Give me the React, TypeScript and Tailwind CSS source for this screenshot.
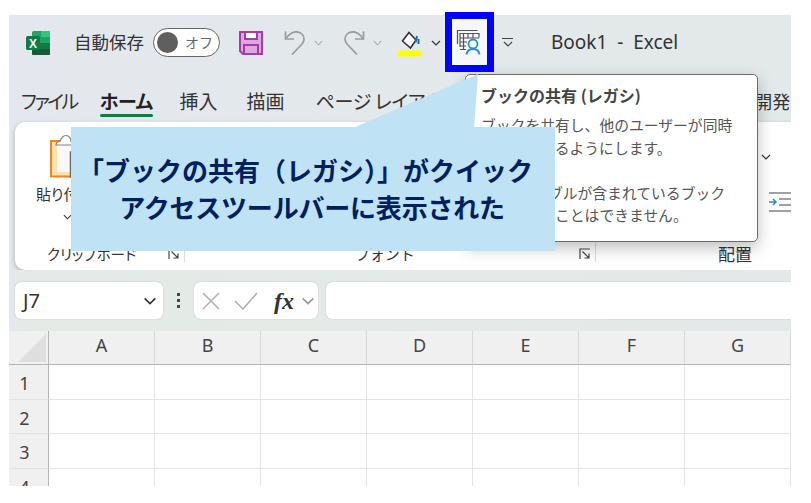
const font = '[font-family:"Noto_Sans_CJK_JP",sans-serif]';

const columns = ["A", "B", "C", "D", "E", "F", "G"];
const rows = ["1", "2", "3", "4"];

const Chevron = ({ className }: { className: string }) => (
  <svg viewBox="0 0 10 6" className={className} fill="none" stroke="currentColor" strokeWidth="1.2">
    <path d="M1 1l4 4 4-4" />
  </svg>
);

const ExcelLogo = () => (
  <svg viewBox="0 0 24 24" className="w-[24px] h-[24px]">
    <rect x="6" y="0" width="18" height="24" rx="1.5" fill="#21a366" />
    <rect x="15" y="0" width="9" height="6" fill="#33c481" />
    <rect x="6" y="12" width="18" height="6" fill="#107c41" />
    <rect x="15" y="6" width="9" height="6" fill="#21a366" />
    <rect x="6" y="18" width="18" height="6" rx="1" fill="#185c37" />
    <rect x="0" y="5" width="14" height="14" rx="1.5" fill="#107c41" />
    <text x="7" y="16.5" textAnchor="middle" fill="#fff" fontSize="12" fontWeight="700" fontFamily="Liberation Sans">X</text>
  </svg>
);

const SaveIcon = () => (
  <svg viewBox="0 0 24 24" className="w-[24px] h-[24px]">
    <path d="M1 1h22v22H4l-3-3z" fill="#dfa6df" stroke="#a23fa6" strokeWidth="2" />
    <rect x="6" y="1" width="12" height="7" fill="#fff" stroke="#a23fa6" strokeWidth="2" />
    <rect x="5" y="14" width="14" height="9" fill="#dfa6df" stroke="#a23fa6" strokeWidth="2" />
  </svg>
);

const UndoIcon = ({ flip }: { flip?: boolean }) => (
  <svg viewBox="0 0 24 24" className={flip ? "w-[24px] h-[24px] -scale-x-100" : "w-[24px] h-[24px]"} fill="none" stroke="#9c9c9c" strokeWidth="1.7">
    <path d="M2.500 0.500v7.500H11" />
    <path d="M2.500 8C6 3 9 0.800 13 0.800c5 0 8 3.500 8 7.200 0 2-1 3.800-2 5L9 23.500" />
  </svg>
);

const FillIcon = () => (
  <svg viewBox="0 0 24 26" className="w-[24px] h-[26px]" fill="none">
    <path d="M11 1.500L4.500 10l8 7 5.500-8z" stroke="#333" strokeWidth="1.600" fill="#fff" />
    <path d="M19 5c-.5 3-1 5-1.500 6.500M20.500 8v5" stroke="#1f6fb2" strokeWidth="2" />
    <rect x="0" y="19.500" width="24" height="6" fill="#ffff00" />
  </svg>
);

const ShareIcon = () => (
  <svg viewBox="0 0 26 26" className="w-[26px] h-[26px]" fill="none">
    <path d="M1.500 15V1.500h20M4 18V4.500h19v4M7.500 4.500V20.500H10M4 9h19M4 13h7M4 17h6M4 20.500h6M12 4.500V9M17 4.500V9" stroke="#555" strokeWidth="1.200" />
    <circle cx="17" cy="15" r="4.500" stroke="#2a8fd0" strokeWidth="1.800" fill="#f7f8f9" />
    <path d="M10.500 25.500c.5-3.500 3-5.500 6.500-5.500s6 2 6.500 5.500" stroke="#2a8fd0" strokeWidth="1.800" />
  </svg>
);

const ClipboardIcon = () => (
  <svg viewBox="0 0 36 44" className="w-[36px] h-[44px]" fill="none">
    <rect x="1" y="7" width="28" height="35.500" fill="#fde3a8" stroke="#e8862a" strokeWidth="2" />
    <rect x="7" y="9" width="22" height="29" fill="#f8f8f8" />
    <rect x="20.500" y="18" width="14" height="25" fill="#fff" stroke="#666" strokeWidth="1.500" />
    <path d="M6 11c0-2 1-3.500 4-3.500 1-3 3-6 6-6s5 3 5 6c3 0 4 1.500 4 3.500z" fill="#fff" stroke="#808080" strokeWidth="1.200" />
  </svg>
);

const Launcher = () => (
  <svg viewBox="0 0 12 12" className="w-[12px] h-[12px]" fill="none" stroke="#444" strokeWidth="1.200">
    <path d="M1 11V1h10M3.500 3.500L10 10M10 5.500V10H5.500" />
  </svg>
);

const Tab = ({ label, className, active }: { label: string; className: string; active?: boolean }) => (
  <div className={`relative shrink-0 whitespace-nowrap ${className} ${active ? "font-bold text-[#222]" : "text-[#333]"}`}>
    {label}
    {active && <div className="absolute left-0 right-0 top-[27px] h-[3px] rounded-full bg-[#107c41]" />}
  </div>
);

export default function App() {
  return (
    <div className={`relative w-[811px] h-[503px] overflow-hidden bg-white pt-[15px] pl-[9px] ${font}`}>
      {/* excel window */}
      <div className="flex flex-col w-[782px] h-[471px] overflow-hidden bg-gradient-to-r from-[#e4e8ee] to-[#e3e9e8]">
        {/* title bar */}
        <div className="flex items-center h-[55px] shrink-0 text-[#333]">
          <div className="ml-[17px]"><ExcelLogo /></div>
          <span className="ml-[24px] text-[17.500px] whitespace-nowrap">自動保存</span>
          <div className="ml-[9px] flex items-center justify-between w-[67px] h-[29px] rounded-full border-[1.5px] border-[#666] bg-white pl-[3px] pr-[6px]">
            <div className="w-[21px] h-[21px] rounded-full bg-[#5f5f5f]" />
            <span className="text-[14px] text-[#666]">オフ</span>
          </div>
          <div className="ml-[19px]"><SaveIcon /></div>
          <div className="ml-[20px]"><UndoIcon /></div>
          <Chevron className="ml-[7px] w-[9px] h-[6px] text-[#aaa]" />
          <div className="ml-[19px]"><UndoIcon flip /></div>
          <Chevron className="ml-[7px] w-[9px] h-[6px] text-[#aaa]" />
          <div className="ml-[16px] mt-[2px]"><FillIcon /></div>
          <Chevron className="ml-[9px] w-[10px] h-[6px] text-[#333]" />
          <div className="ml-[61px] flex flex-col items-center text-[#444]">
            <div className="w-[11px] h-[1.500px] bg-[#444] mb-[2px]" />
            <Chevron className="w-[10px] h-[6px]" />
          </div>
          <span className={`ml-[38px] text-[19px] whitespace-pre [font-family:"Noto_Sans",sans-serif]`}>Book1  -  Excel</span>
        </div>

        {/* tabs */}
        <div className={`flex items-start h-[52px] shrink-0 pt-[17px] text-[19px] leading-[28px] [font-feature-settings:"palt"]`}>
          <Tab label="ファイル" className="ml-[12px] tracking-[-2.500px]" />
          <Tab label="ホーム" className="ml-[23px] tracking-[-0.500px]" active />
          <Tab label="挿入" className="ml-[27px]" />
          <Tab label="描画" className="ml-[29px]" />
          <Tab label="ページ レイアウト" className="ml-[31px] tracking-[-0.300px]" />
          <Tab label="開発" className="ml-[298px] text-[18px]" />
        </div>

        {/* ribbon */}
        <div className="flex shrink-0 h-[148px] ml-[6px] rounded-l-[10px] bg-white shadow-[0_2px_5px_rgba(0,0,0,0.25)] text-[#333]">
          <div className="relative flex flex-col w-[170px] border-r border-[#ddd] mb-[8px] mt-[12px]">
            <div className="ml-[35px]"><ClipboardIcon /></div>
            <div className={`ml-[21px] mt-[4px] text-[15px] leading-[24px] whitespace-nowrap [font-feature-settings:"palt"]`}>貼り付け</div>
            <Chevron className="ml-[48px] mt-[8px] w-[9px] h-[6px]" />
            <div className={`mt-auto flex items-center justify-between pl-[32px] pr-[4px] text-[14.500px] leading-[16px] [font-feature-settings:"palt"]`}>
              <span>クリップボード</span>
              <Launcher />
            </div>
          </div>
          <div className="flex flex-col w-[412px] border-r border-[#ddd] mb-[8px] mt-[12px]">
            <div className="mt-auto flex items-center justify-between pl-[170px] pr-[4px] text-[15px] leading-[16px]">
              <span>フォント</span>
              <Launcher />
            </div>
          </div>
          <div className="flex flex-col flex-1 mb-[6px] mt-[12px]">
            <Chevron className="ml-[165px] mt-[20px] w-[10px] h-[6px]" />
            <svg viewBox="0 0 22 20" className="ml-[173px] mt-[32px] w-[22px] h-[20px]" fill="none">
              <path d="M0 1h22M0 19h22M10 7h12M10 13h12" stroke="#444" strokeWidth="1.200" />
              <path d="M0 10h7M4 7l3 3-3 3" stroke="#2a8fd0" strokeWidth="1.500" />
            </svg>
            <div className="mt-auto ml-[122px] text-[17px] leading-[20px]">配置</div>
          </div>
        </div>

        {/* formula bar */}
        <div className="flex items-center shrink-0 h-[61px] ml-[6px] bg-gradient-to-r from-[#e4ebe6] to-[#e2e9e8]">
          <div className="flex items-center justify-between w-[148px] h-[37px] rounded-[6px] bg-white pl-[8px] pr-[6px] text-[#333] text-[20px] shadow-[0_0_1px_rgba(0,0,0,0.35)] [font-family:'Noto_Sans',sans-serif]">
            <span>J7</span>
            <Chevron className="w-[14px] h-[8px] text-[#333]" />
          </div>
          <div className="flex flex-col gap-[3px] ml-[14px] mr-[14px]">
            <div className="w-[3px] h-[3px] bg-[#444]" />
            <div className="w-[3px] h-[3px] bg-[#444]" />
            <div className="w-[3px] h-[3px] bg-[#444]" />
          </div>
          <div className="flex items-center w-[124px] h-[37px] rounded-[6px] bg-white shadow-[0_0_1px_rgba(0,0,0,0.35)]">
            <svg viewBox="0 0 18 18" className="ml-[8px] w-[18px] h-[18px]" fill="none" stroke="#aaa" strokeWidth="1.400">
              <path d="M1 1l16 16M17 1L1 17" />
            </svg>
            <svg viewBox="0 0 24 18" className="ml-[14px] w-[24px] h-[18px]" fill="none" stroke="#aaa" strokeWidth="1.400">
              <path d="M1 9l8 8L23 1" />
            </svg>
            <span className="ml-[16px] w-[22px] text-[24px] font-bold italic leading-none text-[#333] [font-family:'Liberation_Serif',serif]">fx</span>
            <Chevron className="ml-[5px] w-[14px] h-[8px] text-[#999]" />
          </div>
          <div className="ml-[8px] flex-1 h-[37px] rounded-l-[6px] bg-white shadow-[0_0_1px_rgba(0,0,0,0.35)]" />
        </div>

        {/* sheet */}
        <div className="grid grid-cols-[40px_repeat(7,106px)] grid-rows-[34px_35px_34px_35px_35px] flex-1 bg-white text-[#444] text-[18px] [font-family:'Noto_Sans',sans-serif]">
          <div className="flex items-end justify-end bg-[#f0f0f0] border-r border-b border-[#b5b5b5] pr-[2px] pb-[2px]">
            <div className="w-[28px] h-[28px] bg-[#dedede] [clip-path:polygon(100%_0,100%_100%,0_100%)]" />
          </div>
          {columns.map((c) => (
            <div key={c} className="flex items-center justify-center bg-[#f0f0f0] border-r border-b border-r-[#d8d8d8] border-b-[#b5b5b5] pb-[5px]">
              {c}
            </div>
          ))}
          {rows.map((r) => (
            <div key={r} className="contents">
              <div className="flex items-center justify-center bg-[#f0f0f0] border-r border-b border-r-[#b5b5b5] border-b-[#e2e2e2] pr-[8px] pt-[3px]">
                {r}
              </div>
              {columns.map((c) => (
                <div key={c} className="border-r border-b border-[#e4e4e4]" />
              ))}
            </div>
          ))}
        </div>
      </div>

      {/* tooltip */}
      <div className="absolute left-[465px] top-[74px] w-[293px] h-[168px] rounded-[5px] border-[1.500px] border-[#6b6b6b] bg-white pl-[15px] pt-[8px] text-[#555] shadow-[0_6px_16px_rgba(0,0,0,0.25)]">
        <div className="text-[16px] leading-[24px] font-bold text-[#444] whitespace-nowrap">ブックの共有 (レガシ)</div>
        <div className="mt-[7px] text-[14.800px] leading-[22.500px] whitespace-nowrap">
          ブックを共有し、他のユーザーが同時
          <br />
          に編集できるようにします。
          <br />
          <br />
          Excel テーブルが含まれているブック
          <br />
          は共有することはできません。
        </div>
      </div>

      {/* callout */}
      <div className="absolute left-[71px] top-[127px] flex flex-col items-center justify-center w-[484px] h-[124px] bg-[#bfe2f4] text-[26px] leading-[37px] font-bold text-[#002060] pb-[3px] whitespace-nowrap">
        <div className="mr-[15px]">「ブックの共有（レガシ）」がクイック</div>
        <div className="tracking-[-0.200px] mr-[2px]">アクセスツールバーに表示された</div>
      </div>
      <svg viewBox="0 0 130 56" className="absolute left-[352px] top-[72px] w-[130px] h-[56px]">
        <polygon points="1,56 126,2 122,56" fill="#bfe2f4" />
      </svg>

      {/* highlight on the quick access button */}
      <div className="absolute left-[445px] top-[12px] flex items-center justify-center w-[49px] h-[60px] border-[7px] border-[#0000ff] bg-[#f6f7f8] pr-[2px]">
        <ShareIcon />
      </div>
    </div>
  );
}
